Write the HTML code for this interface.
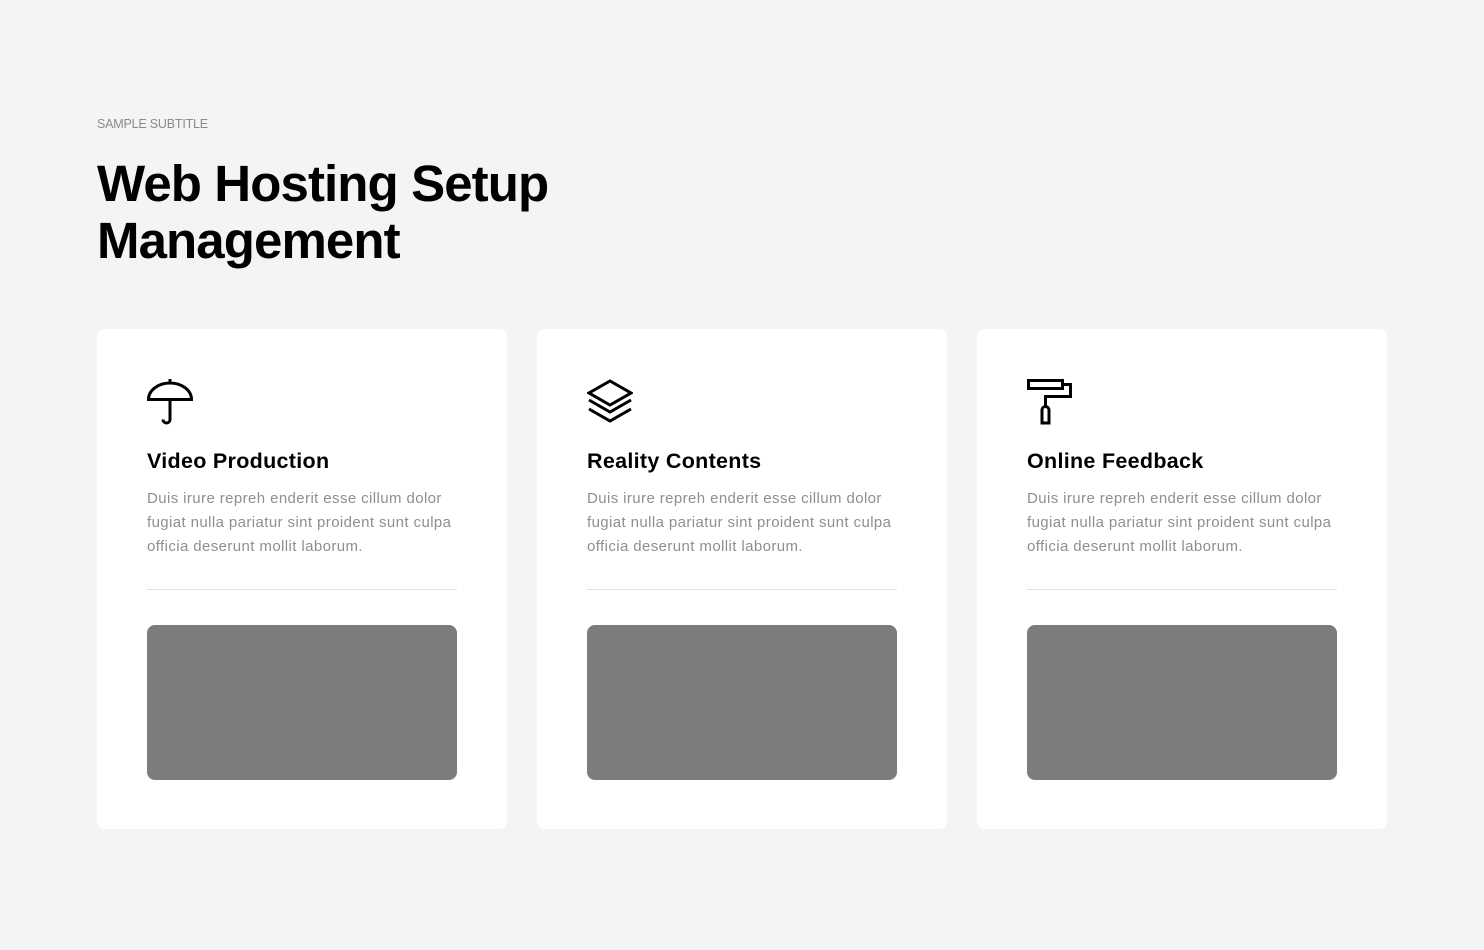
<!DOCTYPE html>
<html><head><style>
body{margin:0;background:#f4f4f4;font-family:"Liberation Sans",sans-serif;width:1484px;height:950px;position:relative;overflow:hidden}
.sub{position:absolute;left:97px;top:117px;font-size:12.5px;color:#8a8a8a;letter-spacing:-0.2px}
h1{position:absolute;left:97px;top:155px;margin:0;font-size:51px;line-height:57px;font-weight:bold;letter-spacing:-0.9px;color:#000}
.card{position:absolute;top:329px;width:410px;height:500px;background:#fff;border-radius:8px}
.ic{position:absolute;left:50px;top:50px}
.card h3{position:absolute;left:50px;top:120px;margin:0;font-size:21.5px;font-weight:bold;letter-spacing:0.3px;color:#000}
.card p{position:absolute;left:50px;top:158px;margin:0;width:312px;font-size:15px;line-height:24px;color:#8f8f8f;letter-spacing:0.4px}
.hr{position:absolute;left:50px;top:260px;width:310px;height:1px;background:#e0e0e0}
.box{position:absolute;left:50px;top:296px;width:310px;height:155px;background:#7b7c7e;border-radius:8px}
</style></head><body>
<div class="sub">SAMPLE SUBTITLE</div>
<h1>Web Hosting Setup<br>Management</h1>

<div class="card" style="left:97px">
<svg class="ic" width="46" height="46" viewBox="0 0 46 46" fill="none" stroke="#000" stroke-width="3"><path d="M23 0v4M1.5 20.5A21.5 16.5 0 0 1 44.5 20.5Z M23 20.5v20a3.5 3.5 0 0 1-7 0"/></svg>
<h3>Video Production</h3>
<p>Duis irure repreh enderit esse cillum dolor fugiat nulla pariatur sint proident sunt culpa officia deserunt mollit laborum.</p>
<div class="hr"></div><div class="box"></div></div>

<div class="card" style="left:537px">
<svg class="ic" width="46" height="46" viewBox="0 0 46 46" fill="none" stroke="#000" stroke-width="3"><path d="M23 2L44 14 23 26 2 14Z M2 21L23 33 44 21 M2 30L23 42 44 30"/></svg>
<h3>Reality Contents</h3>
<p>Duis irure repreh enderit esse cillum dolor fugiat nulla pariatur sint proident sunt culpa officia deserunt mollit laborum.</p>
<div class="hr"></div><div class="box"></div></div>

<div class="card" style="left:977px">
<svg class="ic" width="46" height="46" viewBox="0 0 46 46" fill="none" stroke="#000" stroke-width="3"><path d="M1.5 1.5h34v8h-34Z M35.5 5.5h8v12h-25v10 M15 44V31a3.5 3.5 0 0 1 7 0v13Z"/></svg>
<h3>Online Feedback</h3>
<p>Duis irure repreh enderit esse cillum dolor fugiat nulla pariatur sint proident sunt culpa officia deserunt mollit laborum.</p>
<div class="hr"></div><div class="box"></div></div>
</body></html>
